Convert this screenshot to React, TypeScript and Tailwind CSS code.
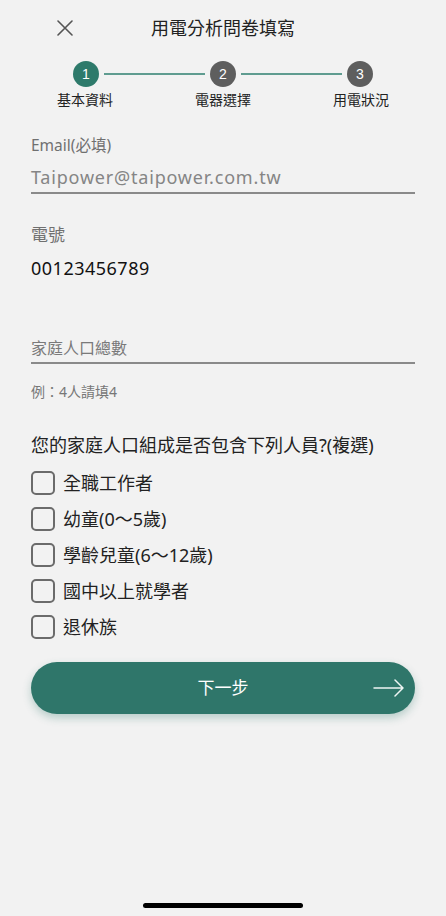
import React from "react";

const steps = ["基本資料", "電器選擇", "用電狀況"];
const options = ["全職工作者", "幼童(0～5歲)", "學齡兒童(6～12歲)", "國中以上就學者", "退休族"];

export default function App() {
  return (
    <div
      className="min-h-[916px] w-full bg-[#f2f2f2] flex flex-col text-[#222]"
      style={{ fontFamily: '"Noto Sans", "Noto Sans CJK TC", sans-serif' }}
    >
      {/* Header */}
      <div className="h-[56px] grid grid-cols-[1fr_auto_1fr] items-center">
        <div className="pl-[57px] flex items-center">
          <svg width="16" height="16" viewBox="0 0 16 16" fill="none" stroke="#555" strokeWidth="1.6" strokeLinecap="round">
            <path d="M1 1 L15 15 M15 1 L1 15" />
          </svg>
        </div>
        <div className="text-[18px] leading-[24px] text-[#222]">用電分析問卷填寫</div>
        <div />
      </div>

      {/* Stepper */}
      <div className="mt-[5px] px-[73px] flex items-center">
        <div className="w-[26px] h-[26px] rounded-full bg-[#2e7a6b] text-white text-[14px] flex items-center justify-center" style={{ fontFamily: '"Liberation Sans", sans-serif' }}>1</div>
        <div className="flex-1 mx-[5px] h-[2px] bg-[#5f9c90]" />
        <div className="w-[26px] h-[26px] rounded-full bg-[#5e5e5e] text-white text-[14px] flex items-center justify-center" style={{ fontFamily: '"Liberation Sans", sans-serif' }}>2</div>
        <div className="flex-1 mx-[5px] h-[2px] bg-[#5f9c90]" />
        <div className="w-[26px] h-[26px] rounded-full bg-[#5e5e5e] text-white text-[14px] flex items-center justify-center" style={{ fontFamily: '"Liberation Sans", sans-serif' }}>3</div>
      </div>
      <div className="mt-[4px] px-[57px] flex justify-between">
        {steps.map((s) => (
          <div key={s} className="w-[56px] text-center text-[14px] leading-[18px] whitespace-nowrap text-[#222]">{s}</div>
        ))}
      </div>

      {/* Form */}
      <div className="px-[31px] flex flex-col">
        <div className="mt-[26px] text-[15.5px] leading-[20px] text-[#707070]">Email(必填)</div>
        <div className="mt-[10px] pb-[3px] border-b-2 border-[#8a8a8a]">
          <div className="text-[18px] leading-[24px] tracking-[0.8px] text-[#858585]">Taipower@taipower.com.tw</div>
        </div>

        <div className="mt-[30px] text-[17px] leading-[22px] text-[#707070]">電號</div>
        <div className="mt-[10px] text-[18px] leading-[24px] tracking-[0.5px] text-[#111]">00123456789</div>

        <div className="mt-[57px] pb-[3px] border-b-2 border-[#8a8a8a]">
          <div className="text-[16px] leading-[22px] text-[#7a7a7a]">家庭人口總數</div>
        </div>
        <div className="mt-[19px] text-[14px] leading-[18px] text-[#777]">例：4人請填4</div>

        <div className="mt-[32px] text-[18px] leading-[24px] text-[#222] whitespace-nowrap">您的家庭人口組成是否包含下列人員?(複選)</div>

        <div className="mt-[8px] flex flex-col">
          {options.map((o) => (
            <div key={o} className="h-[36px] flex items-center">
              <div className="w-[24px] h-[24px] rounded-[5px] border-2 border-[#6b6b6b]" />
              <div className="ml-[8px] text-[18px] leading-[24px] text-[#222]">{o}</div>
            </div>
          ))}
        </div>

        <button className="mt-[17px] relative h-[52px] w-full rounded-full bg-[#2f766a] shadow-[0_4px_8px_rgba(47,118,106,0.3)] flex items-center justify-center">
          <span className="text-[17px] text-white">下一步</span>
          <svg className="absolute right-[11px] top-1/2 -translate-y-1/2" width="31" height="18" viewBox="0 0 31 18" fill="none" stroke="#eef5f3" strokeWidth="1.5" strokeLinecap="round" strokeLinejoin="round">
            <path d="M1 9 H30 M22 1 L30 9 L22 17" />
          </svg>
        </button>
      </div>

      <div className="flex-1" />
      <div className="mb-[8px] mx-auto w-[160px] h-[5px] rounded-full bg-black" />
    </div>
  );
}
